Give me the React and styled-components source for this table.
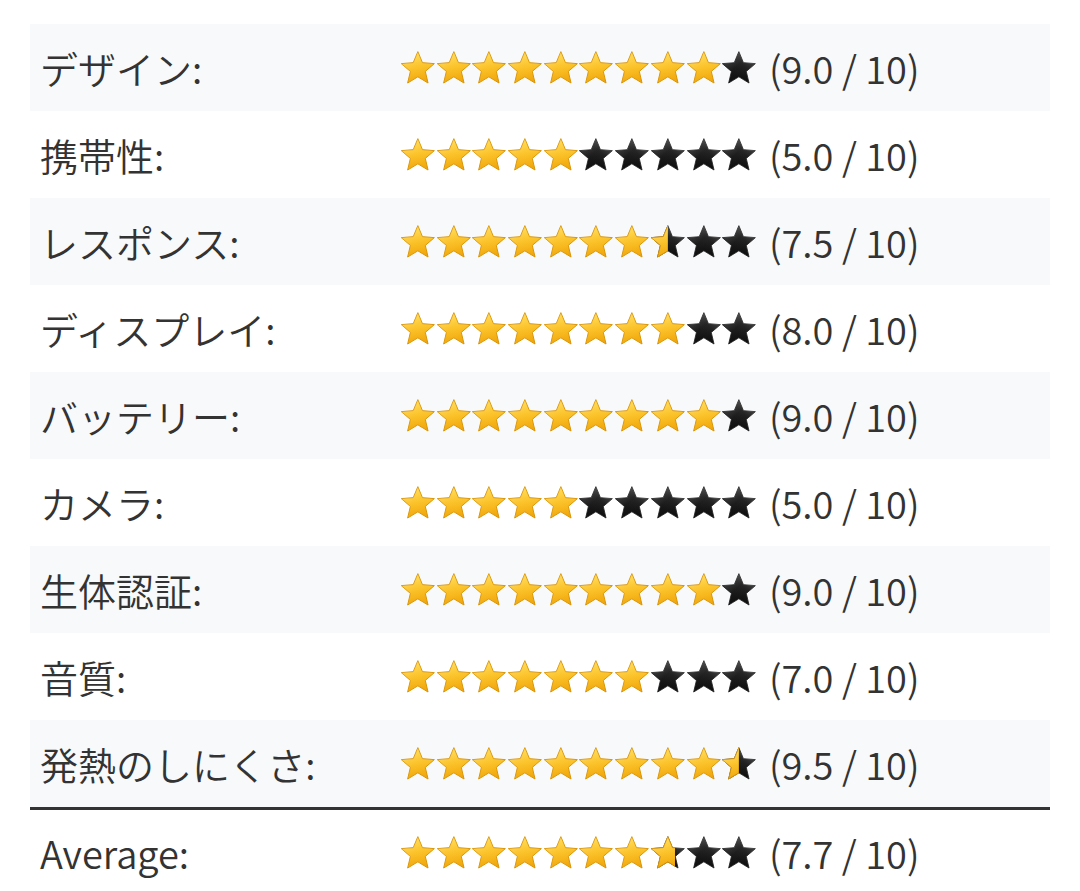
import React, { useId } from "react";
import styled, { createGlobalStyle } from "styled-components";

const Global = createGlobalStyle`
  html, body { margin: 0; padding: 0; background: #ffffff; }
  body { font-family: "Noto Sans CJK JP", "Noto Sans", sans-serif; color: #333333; }
`;

const Page = styled.div`
  padding: 24px 30px 0 30px;
  height: 891px;
  box-sizing: border-box;
  overflow: hidden;
`;

const Table = styled.div`
  display: flex;
  flex-direction: column;
  width: 1020px;
`;

const Row = styled.div`
  display: grid;
  grid-template-columns: 360px 1fr;
  align-items: center;
  height: ${(p) => (p.$total ? 89 : 87)}px;
  padding-left: 10px;
  box-sizing: border-box;
  background: ${(p) => (p.$shaded ? "#f8f9fb" : "#ffffff")};
  border-top: ${(p) => (p.$total ? "3px solid #333333" : "none")};
`;

const Label = styled.div`
  font-size: 38px;
  font-weight: 350;
  line-height: 1;
  color: #333333;
  white-space: nowrap;
`;

const RatingCell = styled.div`
  display: flex;
  align-items: center;
  gap: 12px;
`;

const Stars = styled.div`
  display: flex;
  align-items: center;
`;

const Score = styled.span`
  font-size: 38px;
  font-weight: 350;
  line-height: 1;
  color: #333333;
  white-space: nowrap;
`;

const Defs = styled.svg`
  display: block;
  width: 0;
  height: 0;
  overflow: hidden;
`;

const StarSvg = styled.svg`
  display: block;
  width: 35.7px;
  height: 36px;
  flex: none;
`;

const starPoints = (() => {
  const cx = 18, cy = 19, R = 17.5, r = 7.9;
  const pts = [];
  for (let i = 0; i < 10; i++) {
    const a = ((-90 + i * 36) * Math.PI) / 180;
    const rad = i % 2 === 0 ? R : r;
    pts.push(`${(cx + rad * Math.cos(a)).toFixed(2)},${(cy + rad * Math.sin(a)).toFixed(2)}`);
  }
  return pts.join(" ");
})();

function Star({ fill }) {
  const id = useId().replace(/:/g, "");
  return (
    <StarSvg viewBox="0 0 36 36">
      <defs>
        <clipPath id={`c${id}`}>
          <rect x="0" y="0" width={36 * fill} height="36" />
        </clipPath>
      </defs>
      {fill < 1 && (
        <g>
          <polygon points={starPoints} fill="url(#starDark)" stroke="#1a1a1a" strokeWidth="0.8" strokeLinejoin="round" />
          <polygon points={starPoints} fill="url(#starDarkGloss)" />
        </g>
      )}
      {fill > 0 && (
        <g clipPath={fill < 1 ? `url(#c${id})` : undefined}>
          <polygon points={starPoints} fill="url(#starGold)" stroke="#d99200" strokeWidth="1" strokeLinejoin="round" />
          <polygon points={starPoints} fill="url(#starGoldGloss)" />
        </g>
      )}
    </StarSvg>
  );
}

function StarRow({ value }) {
  const stars = [];
  for (let i = 0; i < 10; i++) {
    const f = Math.max(0, Math.min(1, value - i));
    stars.push(<Star key={i} fill={f} />);
  }
  return <Stars>{stars}</Stars>;
}

const data = [
  ["デザイン:", 9.0],
  ["携帯性:", 5.0],
  ["レスポンス:", 7.5],
  ["ディスプレイ:", 8.0],
  ["バッテリー:", 9.0],
  ["カメラ:", 5.0],
  ["生体認証:", 9.0],
  ["音質:", 7.0],
  ["発熱のしにくさ:", 9.5],
];

export default function App() {
  return (
    <>
      <Global />
      <Defs aria-hidden="true">
        <defs>
          <linearGradient id="starGold" x1="0" y1="0" x2="0" y2="1">
            <stop offset="0" stopColor="#ffd84a" />
            <stop offset="0.5" stopColor="#fbbd1c" />
            <stop offset="1" stopColor="#f0a200" />
          </linearGradient>
          <linearGradient id="starGoldGloss" x1="0" y1="0" x2="1" y2="1">
            <stop offset="0" stopColor="#fff2b0" stopOpacity="0.5" />
            <stop offset="0.45" stopColor="#ffe680" stopOpacity="0.15" />
            <stop offset="1" stopColor="#e09000" stopOpacity="0.2" />
          </linearGradient>
          <linearGradient id="starDark" x1="0" y1="0" x2="1" y2="1">
            <stop offset="0" stopColor="#5a5a5a" />
            <stop offset="0.45" stopColor="#151515" />
            <stop offset="1" stopColor="#000000" />
          </linearGradient>
          <linearGradient id="starDarkGloss" x1="1" y1="0" x2="0" y2="1">
            <stop offset="0" stopColor="#bbbbbb" stopOpacity="0.55" />
            <stop offset="0.4" stopColor="#888888" stopOpacity="0.15" />
            <stop offset="1" stopColor="#000000" stopOpacity="0" />
          </linearGradient>
        </defs>
      </Defs>
      <Page>
        <Table>
          {data.map(([label, v], i) => (
            <Row key={label} $shaded={i % 2 === 0}>
              <Label>{label}</Label>
              <RatingCell>
                <StarRow value={v} />
                <Score>({v.toFixed(1)} / 10)</Score>
              </RatingCell>
            </Row>
          ))}
          <Row $total>
            <Label>Average:</Label>
            <RatingCell>
              <StarRow value={7.7} />
              <Score>(7.7 / 10)</Score>
            </RatingCell>
          </Row>
        </Table>
      </Page>
    </>
  );
}
